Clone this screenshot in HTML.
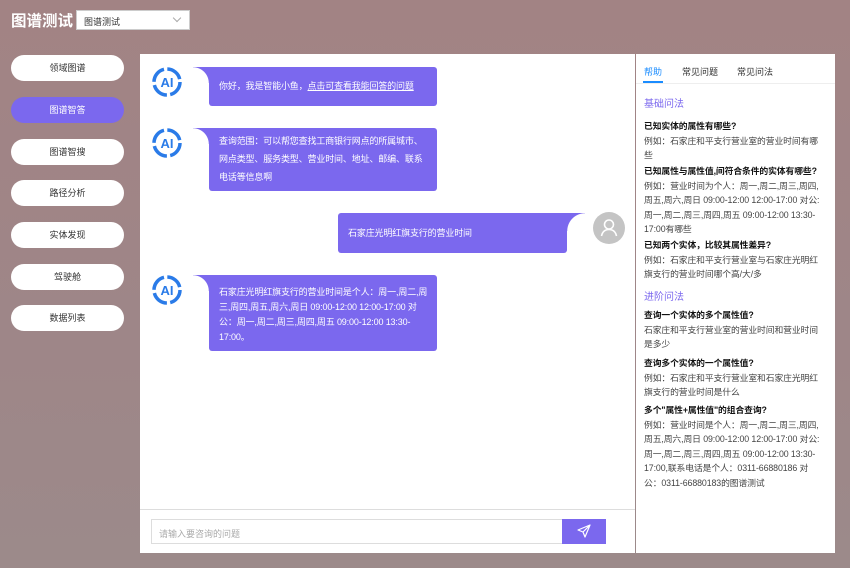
<!DOCTYPE html>
<html><head><meta charset="utf-8"><style>
*{margin:0;padding:0;box-sizing:border-box}
body{width:850px;height:568px;overflow:hidden;position:relative;font-family:"Liberation Sans","Noto Sans CJK SC",sans-serif;background:linear-gradient(180deg,#a28384 0%,#9e8688 60%,#9c8a8a 100%);}
.a{position:absolute}
.title{left:11px;top:9px;color:#fff;font-size:15.5px;font-weight:bold;white-space:nowrap}
.sel{left:76px;top:10px;width:114px;height:20px;background:#fff;border:1px solid #ccc;font-size:9px;color:#333;padding:4px 7px}
.sel i{position:absolute;right:9px;top:4px;width:6px;height:6px;border-right:1px solid #aaa;border-bottom:1px solid #aaa;transform:rotate(45deg)}
.btn{left:11px;width:113px;height:26px;border-radius:13px;background:#fff;font-size:9px;color:#333;text-align:center;line-height:26px}
.btn.on{background:#7b68ee;color:#fff}
.main{left:140px;top:54px;width:495px;height:499px;background:#fff}
.right{left:636px;top:54px;width:199px;height:499px;background:#fff}
.bub{position:absolute;background:#7b68ee;color:#fff;font-size:9px;line-height:18px;border-radius:0 3px 3px 3px;padding:0 10px;white-space:nowrap;letter-spacing:-0.15px}
.bub.l:before{content:"";position:absolute;left:-16px;top:0;width:16px;height:16px;background:radial-gradient(circle at 0 100%,transparent 15.5px,#7b68ee 16px)}
.bub.r{border-radius:3px 0 3px 3px}
.bub.r:after{content:"";position:absolute;right:-18px;top:0;width:18px;height:18px;background:radial-gradient(circle at 100% 100%,transparent 17.5px,#7b68ee 18px)}
.ai{position:absolute;left:11px;width:32px;height:32px}
.tab{font-size:9px;color:#333;top:11px}
.h{color:#7b68ee;font-size:10px}
.t{font-size:8.8px;line-height:14.5px;color:#444;left:8px;white-space:nowrap;letter-spacing:-0.1px}
.t b{color:#111}
</style></head><body>
<div class="a title">图谱测试</div>
<div class="a sel">图谱测试<i></i></div>
<div class="a btn" style="top:55px">领域图谱</div>
<div class="a btn on" style="top:97px">图谱智答</div>
<div class="a btn" style="top:139px">图谱智搜</div>
<div class="a btn" style="top:180px">路径分析</div>
<div class="a btn" style="top:222px">实体发现</div>
<div class="a btn" style="top:264px">驾驶舱</div>
<div class="a btn" style="top:305px">数据列表</div>

<div class="a main">
<svg class="ai" style="top:12px" viewBox="0 0 32 32"><circle cx="16" cy="16" r="13" fill="none" stroke="#2a7be8" stroke-width="3.5" stroke-dasharray="17 3.4"/><text x="16" y="21" text-anchor="middle" font-size="13" font-weight="bold" fill="#2a7be8" font-family="Liberation Sans">AI</text></svg>
<div class="bub l" style="left:69px;top:13px;width:228px;height:39px;padding-top:10px">你好，我是智能小鱼，<u>点击可查看我能回答的问题</u></div>
<svg class="ai" style="top:73px" viewBox="0 0 32 32"><circle cx="16" cy="16" r="13" fill="none" stroke="#2a7be8" stroke-width="3.5" stroke-dasharray="17 3.4"/><text x="16" y="21" text-anchor="middle" font-size="13" font-weight="bold" fill="#2a7be8" font-family="Liberation Sans">AI</text></svg>
<div class="bub l" style="left:69px;top:74px;width:228px;height:63px;padding-top:4px">查询范围：可以帮您查找工商银行网点的所属城市、<br>网点类型、服务类型、营业时间、地址、邮编、联系<br>电话等信息啊</div>
<div class="bub r" style="left:198px;top:159px;width:229px;height:40px;padding-top:11px">石家庄光明红旗支行的营业时间</div>
<svg class="a" style="left:453px;top:158px" width="32" height="32" viewBox="0 0 32 32"><circle cx="16" cy="16" r="16" fill="#c4c4c4"/><circle cx="16" cy="12.5" r="4.5" fill="none" stroke="#fff" stroke-width="1.6"/><path d="M8.5 24c1-4.5 4-6.5 7.5-6.5s6.5 2 7.5 6.5" fill="none" stroke="#fff" stroke-width="1.6"/></svg>
<svg class="ai" style="top:220px" viewBox="0 0 32 32"><circle cx="16" cy="16" r="13" fill="none" stroke="#2a7be8" stroke-width="3.5" stroke-dasharray="17 3.4"/><text x="16" y="21" text-anchor="middle" font-size="13" font-weight="bold" fill="#2a7be8" font-family="Liberation Sans">AI</text></svg>
<div class="bub l" style="left:69px;top:221px;width:228px;height:76px;padding-top:10px;line-height:15px">石家庄光明红旗支行的营业时间是个人：周一,周二,周<br>三,周四,周五,周六,周日 09:00-12:00 12:00-17:00 对<br>公：周一,周二,周三,周四,周五 09:00-12:00 13:30-<br>17:00。</div>
<div class="a" style="left:0;top:455px;width:495px;height:1px;background:#ddd"></div>
<div class="a" style="left:11px;top:465px;width:412px;height:25px;border:1px solid #ddd;font-size:9px;color:#aaa;padding:7px 7px">请输入要咨询的问题</div>
<div class="a" style="left:422px;top:465px;width:44px;height:25px;background:#7b68ee"><svg width="44" height="25" viewBox="0 0 44 25"><path d="M16 11l12-5-5 12-2-5z M21 13l7-7" fill="none" stroke="#fff" stroke-width="1.2" stroke-linejoin="round"/></svg></div>
</div>

<div class="a right">
<div class="a tab" style="left:8px;color:#1a8cff">帮助</div>
<div class="a tab" style="left:46px">常见问题</div>
<div class="a tab" style="left:101px">常见问法</div>
<div class="a" style="left:7px;top:27px;width:20px;height:2px;background:#1a8cff"></div>
<div class="a" style="left:0;top:29px;width:199px;height:1px;background:#eee"></div>
<div class="a h" style="left:8px;top:41px">基础问法</div>
<div class="a t" style="top:65px"><b>已知实体的属性有哪些?</b><br>例如：石家庄和平支行营业室的营业时间有哪<br>些</div>
<div class="a t" style="top:110px"><b>已知属性与属性值,间符合条件的实体有哪些?</b><br>例如：营业时间为个人：周一,周二,周三,周四,<br>周五,周六,周日 09:00-12:00 12:00-17:00 对公:<br>周一,周二,周三,周四,周五 09:00-12:00 13:30-<br>17:00有哪些</div>
<div class="a t" style="top:184px"><b>已知两个实体，比较其属性差异?</b><br>例如：石家庄和平支行营业室与石家庄光明红<br>旗支行的营业时间哪个高/大/多</div>
<div class="a h" style="left:8px;top:234px">进阶问法</div>
<div class="a t" style="top:254px"><b>查询一个实体的多个属性值?</b><br>石家庄和平支行营业室的营业时间和营业时间<br>是多少</div>
<div class="a t" style="top:302px"><b>查询多个实体的一个属性值?</b><br>例如：石家庄和平支行营业室和石家庄光明红<br>旗支行的营业时间是什么</div>
<div class="a t" style="top:349px"><b>多个"属性+属性值"的组合查询?</b><br>例如：营业时间是个人：周一,周二,周三,周四,<br>周五,周六,周日 09:00-12:00 12:00-17:00 对公:<br>周一,周二,周三,周四,周五 09:00-12:00 13:30-<br>17:00,联系电话是个人：0311-66880186 对<br>公：0311-66880183的图谱测试</div>
</div>
</body></html>
